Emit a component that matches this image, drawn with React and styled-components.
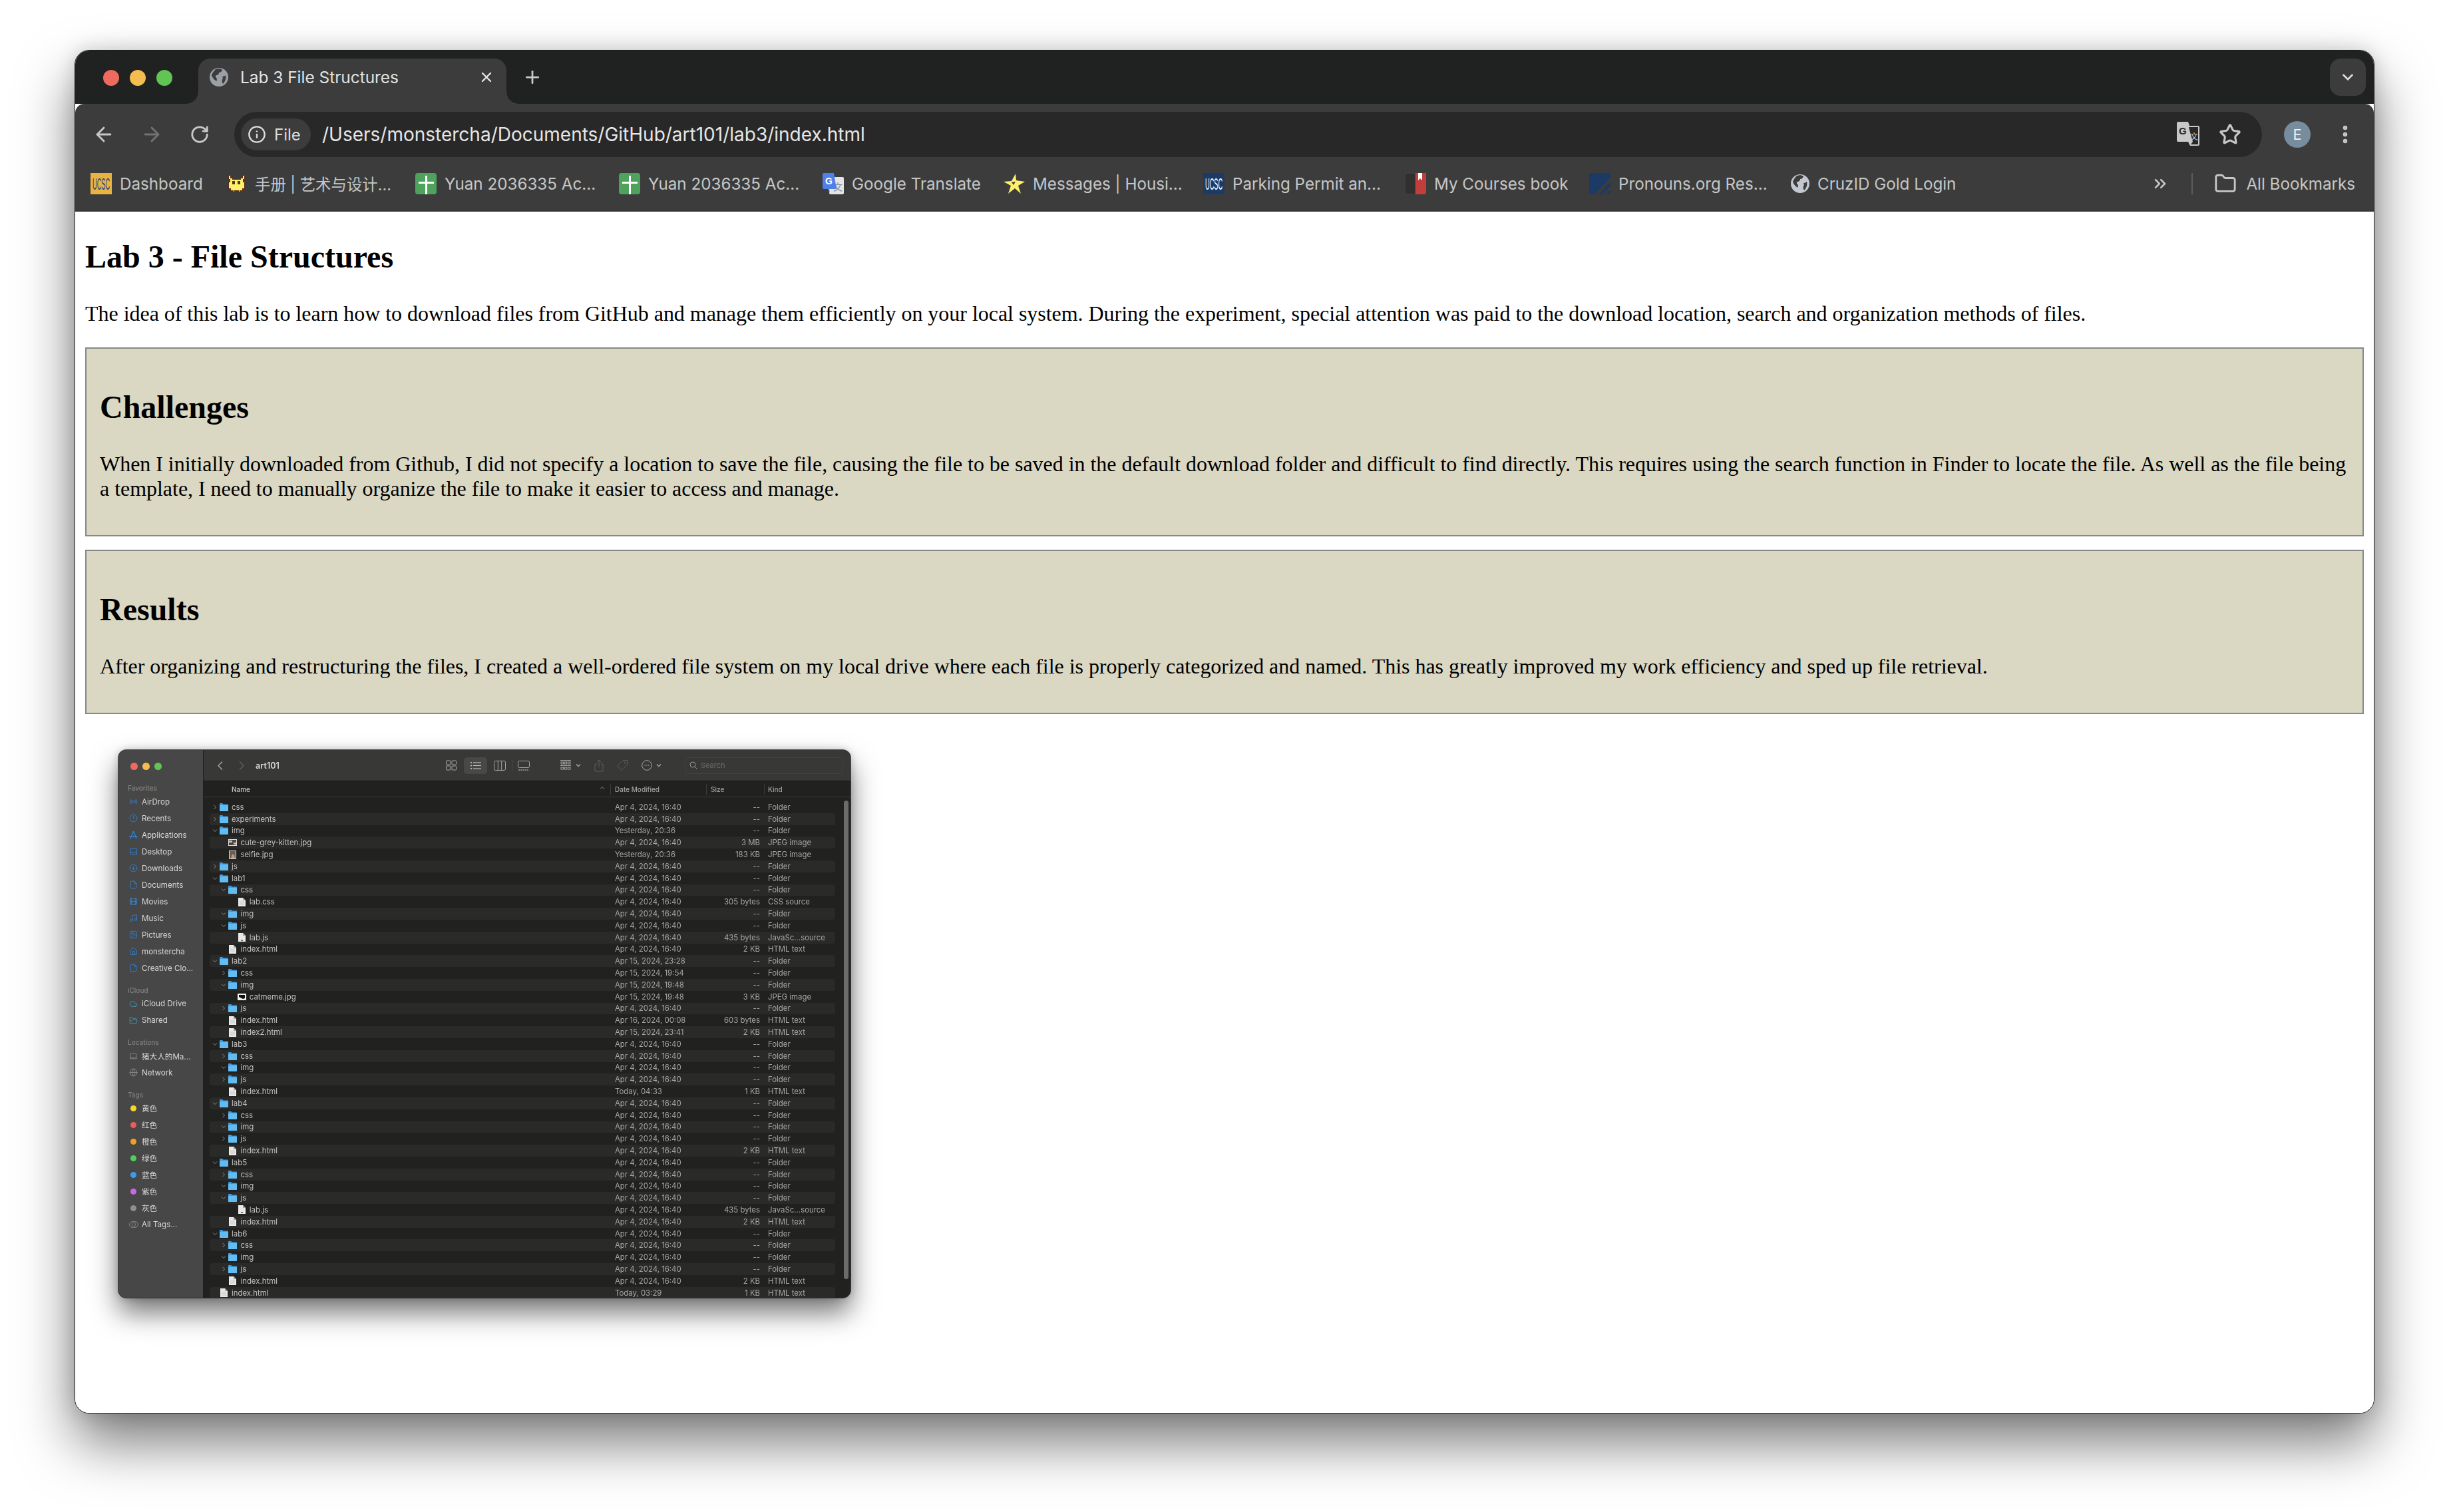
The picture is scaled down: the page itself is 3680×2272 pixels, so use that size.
import React from 'react'
import styled, { createGlobalStyle } from 'styled-components'
import {
  ArrowLeft, ArrowRight, RotateCw, Info, Star, EllipsisVertical, Plus, X, ChevronDown, ChevronsRight, Folder,
  Clock, PanelBottom, CircleArrowDown, File, Film, Music, Image, House, Cloud, FolderOpen, Laptop, Globe, Radio,
} from 'lucide-react'

const UI_FONT = `Inter, "Noto Sans CJK SC", sans-serif`

const GlobalStyle = createGlobalStyle`
  html, body { margin: 0; padding: 0; background: #fff; }
`

const Page = styled.div`
  width: 3680px;
  height: 2272px;
  box-sizing: border-box;
  padding: 75px 112px 0;
  overflow: hidden;
  background: #fff;
`

const Win = styled.div`
  width: 3456px;
  height: 2049px;
  box-sizing: border-box;
  border: 1px solid #1c1c1c;
  border-radius: 22px;
  overflow: hidden;
  display: flex;
  flex-direction: column;
  background: #fff;
  box-shadow: 0 44px 84px rgba(0, 0, 0, 0.52), 0 0 30px rgba(0, 0, 0, 0.16);
  font-family: ${UI_FONT};
`

const TabStrip = styled.div`
  height: 80px;
  box-sizing: border-box;
  padding: 12px 12px 0 42px;
  display: flex;
  align-items: flex-end;
  background: #202221;
  flex-shrink: 0;
`

const Lights = styled.div`
  display: flex;
  gap: ${p => p.$gap}px;
  align-self: center;
  margin-top: ${p => p.$top || 0}px;
`

const Light = styled.span`
  display: block;
  width: ${p => p.$size}px;
  height: ${p => p.$size}px;
  border-radius: 50%;
  background: ${p => p.$color};
`

const Tab = styled.div`
  position: relative;
  width: 463px;
  height: 68px;
  margin-left: 39px;
  box-sizing: border-box;
  padding: 0 18px 12px 17px;
  display: flex;
  align-items: center;
  gap: 18px;
  background: #3c3c3c;
  border-radius: 18px 18px 0 0;
  color: #e2e2e2;
  font-size: 24.4px;

  &::before, &::after {
    content: '';
    position: absolute;
    bottom: 0;
    width: 18px;
    height: 18px;
  }
  &::before { left: -18px; background: radial-gradient(circle at 0 0, transparent 17.5px, #3c3c3c 18px); }
  &::after { right: -18px; background: radial-gradient(circle at 100% 0, transparent 17.5px, #3c3c3c 18px); }
`

const TabTitle = styled.span`
  flex: 1;
  white-space: nowrap;
`

const NewTab = styled.span`
  display: flex;
  margin: 0 0 12px 24px;
  align-self: center;
  color: #c8c8c8;
`

const TabMenu = styled.span`
  margin-left: auto;
  align-self: flex-start;
  width: 54px;
  height: 56px;
  border-radius: 16px;
  background: #3c3c3c;
  color: #d8d8d8;
  display: flex;
  align-items: center;
  justify-content: center;
`

const Toolbar = styled.div`
  flex-shrink: 0;
  height: 162px;
  box-sizing: border-box;
  background: #3c3c3c;
  border-bottom: 2px solid #323232;
  border-radius: 14px 14px 0 0;
  display: flex;
  flex-direction: column;
`

const NavRow = styled.div`
  height: 80px;
  box-sizing: border-box;
  padding: 12px 7px 0;
  display: flex;
  align-items: center;
`

const NavBtn = styled.span`
  width: 72px;
  height: 68px;
  display: flex;
  align-items: center;
  justify-content: center;
  flex-shrink: 0;
  color: ${p => (p.$dim ? '#737373' : '#c8c8c8')};
`

const Omnibox = styled.div`
  flex: 1;
  height: 68px;
  margin: 0 17px 0 16px;
  box-sizing: border-box;
  padding: 0 31px 0 10px;
  border-radius: 34px;
  background: #282828;
  display: flex;
  align-items: center;
`

const FileChip = styled.span`
  width: 105px;
  height: 48px;
  box-sizing: border-box;
  padding-left: 10px;
  border-radius: 24px;
  background: #3c3c3c;
  color: #dcdcdc;
  display: flex;
  align-items: center;
  gap: 12px;
  font-size: 24px;
`

const UrlText = styled.span`
  margin-left: 17px;
  flex: 1;
  color: #e6e6e6;
  font-size: 28px;
  white-space: nowrap;
`

const OmniIcon = styled.span`
  display: flex;
  margin-left: ${p => p.$ml}px;
  color: #c8c8c8;
`

const Avatar = styled.span`
  width: 40px;
  height: 40px;
  border-radius: 50%;
  background: #778c9d;
  color: #eef2f5;
  font-size: 22px;
  display: flex;
  align-items: center;
  justify-content: center;
`

const BookmarkBar = styled.div`
  height: 80px;
  box-sizing: border-box;
  padding: 0 28px 0 23px;
  display: flex;
  align-items: center;
  gap: 36px;
`

const Bookmark = styled.div`
  display: flex;
  align-items: center;
  gap: 12px;
  color: #c7c7c7;
  font-size: 24.2px;
  flex-shrink: 0;
`

const BookmarkLabel = styled.span`
  width: ${p => p.$w}px;
  white-space: nowrap;
  font-size: ${p => (p.$cjk ? '23.4px' : 'inherit')};
`

const BookmarkEnd = styled.div`
  margin-left: auto;
  display: flex;
  align-items: center;
  color: #c7c7c7;
  font-size: 24.2px;
  white-space: nowrap;
`

const BarDivider = styled.span`
  width: 2px;
  height: 32px;
  margin: 0 32px 0 33px;
  background: #5b5b5b;
`

const AllBookmarks = styled.span`
  margin-left: 14px;
`

const Content = styled.main`
  flex: 1;
  overflow: hidden;
  padding: 0 15px;
  background: #fff;
  color: #000;
  font-family: "Liberation Serif", serif;
  font-size: 32px;
`

const Heading = styled.h2`
  margin: 40px 0;
  font-size: 48px;
  font-weight: 700;
`

const Lead = styled.p`
  margin: 32px 0;
  letter-spacing: -0.03px;
`

const Panel = styled.section`
  margin: 20px 0;
  padding: 19.5px 20px;
  border: 2px solid #888;
  background: #dad7c3;
`

const Shot = styled.div`
  margin-top: 20px;
  padding: 34px 50px;
`

/* finder screenshot inside the page */
const Finder = styled.div`
  position: relative;
  width: 1100px;
  height: 823px;
  border-radius: 12px;
  overflow: hidden;
  display: flex;
  background: #212120;
  box-shadow: 0 22px 42px rgba(0, 0, 0, 0.55), 0 0 14px rgba(0, 0, 0, 0.22), 0 0 0 1px #5d5d5d;
  filter: blur(0.35px);
  font-family: ${UI_FONT};
`

const Sidebar = styled.aside`
  width: 128px;
  flex-shrink: 0;
  box-sizing: border-box;
  padding-left: 14px;
  background: #474747;
  border-right: 1px solid #1d1d1d;
`

const SideLights = styled.div`
  height: 49px;
  padding-left: 4px;
  display: flex;
`

const SideHead = styled.div`
  height: 16px;
  margin-top: ${p => (p.$first ? 0 : 12.5)}px;
  line-height: 16px;
  font-size: 10px;
  font-weight: 500;
  color: #828282;
`

const SideItem = styled.div`
  height: 25px;
  padding-left: 1px;
  display: flex;
  align-items: center;
  gap: 5px;
  font-size: 11.6px;
  color: #d8d8d8;
  white-space: nowrap;
`

const SideIcon = styled.span`
  width: 15px;
  display: flex;
  justify-content: center;
  color: ${p => p.$color || '#2c86dc'};
`

const TagDot = styled.span`
  width: 9px;
  height: 9px;
  border-radius: 50%;
  background: ${p => p.$color};
`

const FinderMain = styled.div`
  flex: 1;
  min-width: 0;
  display: flex;
  flex-direction: column;
`

const FinderBar = styled.div`
  height: 47px;
  flex-shrink: 0;
  box-sizing: border-box;
  padding-left: 20px;
  background: #383837;
  border-bottom: 1px solid #161616;
  display: flex;
  align-items: center;
`

const BarSlot = styled.span`
  display: flex;
  align-items: center;
  justify-content: center;
  flex-shrink: 0;
  margin-left: ${p => p.$ml || 0}px;
  color: ${p => p.$color || '#a8a8a8'};
`

const ListPill = styled(BarSlot)`
  width: 35px;
  height: 25px;
  border-radius: 5px;
  background: #484847;
`

const FolderTitle = styled.span`
  width: 40px;
  margin-left: 16px;
  font-size: 12.6px;
  font-weight: 600;
  color: #d6d6d6;
`

const SearchBox = styled.div`
  width: 238px;
  height: 25px;
  margin-left: 35px;
  box-sizing: border-box;
  padding-left: 6px;
  border: 1px solid #424241;
  border-radius: 5px;
  display: flex;
  align-items: center;
  gap: 5px;
  color: #6d6d6d;
  font-size: 11px;
`

const columns = '609px 128px 90px 1fr'

const ListHead = styled.div`
  height: 24px;
  flex-shrink: 0;
  box-sizing: border-box;
  padding-left: 9px;
  display: grid;
  grid-template-columns: ${columns};
  align-items: center;
  background: #212120;
  border-bottom: 1px solid #3a3a39;
  font-size: 10px;
  font-weight: 500;
  color: #a2a2a2;
`

const HeadCell = styled.span`
  position: relative;
  padding-left: ${p => p.$pad || 0}px;
  color: ${p => p.$color || 'inherit'};
  display: flex;
  justify-content: space-between;
  padding-right: ${p => p.$end || 0}px;

  ${p => p.$sep !== undefined && `
    &::before {
      content: '';
      position: absolute;
      left: ${p.$sep}px;
      top: -2px;
      width: 1px;
      height: 16px;
      background: #3b3b3a;
    }
  `}
`

const List = styled.div`
  flex: 1;
  padding-top: 6px;
  overflow: hidden;
`

const Row = styled.div`
  height: 17.8px;
  margin: 0 23px 0 9px;
  display: grid;
  grid-template-columns: ${columns};
  align-items: center;
  border-radius: 4px;
  background: ${p => (p.$odd ? '#2a2a29' : 'transparent')};
  font-size: 11.4px;
  color: #a6a6a6;
  white-space: nowrap;
`

const NameCell = styled.span`
  display: flex;
  align-items: center;
  padding-left: ${p => 2.5 + p.$depth * 13.4}px;
  color: #c2c2c2;
`

const Twist = styled.span`
  width: 10px;
  flex-shrink: 0;
  display: flex;
  justify-content: center;
  color: #8c8c8c;
`

const RowIcon = styled.span`
  width: 13px;
  margin: 0 5px 0 2.5px;
  display: flex;
  justify-content: center;
`

const SizeCell = styled.span`
  text-align: right;
`

const KindCell = styled.span`
  padding-left: 12px;
`

const ScrollThumb = styled.span`
  position: absolute;
  right: 3px;
  top: 76px;
  width: 7px;
  height: 719px;
  border-radius: 4px;
  background: #6b6b6b;
`

const FolderGlyph = () => (
  <svg width="13" height="12" viewBox="0 0 13 12">
    <path d="M0 1.2C0 .5.5 0 1.2 0h3l1.3 1.4h6.3c.7 0 1.2.5 1.2 1.2V12H0Z" fill="#3f9bdf" />
    <path d="M0 3h13v8c0 .6-.4 1-1 1H1c-.6 0-1-.4-1-1Z" fill="#62bbf1" />
  </svg>
)

const PageGlyph = ({ dark }) => (
  <svg width="11" height="13" viewBox="0 0 11 13">
    <path d="M0 0h7l4 4v9H0Z" fill="#e8e8e8" />
    <path d="M7 0v4h4Z" fill="#a5a5a5" />
    {dark
      ? <rect x="4" y="10" width="3" height="2" fill="#777" />
      : <path d="M2 6h7M2 8h7M2 10h7" stroke="#bdbdbd" strokeWidth=".7" />}
  </svg>
)

const ThumbGlyph = ({ name }) => {
  if (name === 'selfie.jpg') {
    return (
      <svg width="11" height="13" viewBox="0 0 11 13">
        <rect width="11" height="13" fill="#d9d9d9" />
        <rect x="1" y="1" width="9" height="11" fill="#6d5b50" />
        <path d="M3 12 5 5l3 2 1 5Z" fill="#b49a88" />
      </svg>
    )
  }
  if (name === 'catmeme.jpg') {
    return (
      <svg width="13" height="10" viewBox="0 0 13 10">
        <rect width="13" height="10" fill="#f2f2f2" />
        <path d="M2 2h9v5l-3 1-4-2-2-1Z" fill="#111" />
      </svg>
    )
  }
  return (
    <svg width="13" height="10" viewBox="0 0 13 10">
      <rect width="13" height="10" fill="#dcdcdc" />
      <rect x="1" y="1" width="11" height="8" fill="#4f463f" />
      <path d="M1 2h5v3H1ZM8 5h4v3H8Z" fill="#c7bdb0" />
    </svg>
  )
}

const TwistGlyph = ({ open }) => (
  <svg width="8" height="8" viewBox="0 0 8 8" fill="none" stroke="currentColor" strokeWidth="1">
    <path d={open ? 'M1 2.5 4 5.5 7 2.5' : 'M2.5 1 5.5 4 2.5 7'} />
  </svg>
)

const GlobeFav = ({ color = '#9aa0a6', ink = '#3c3c3c' }) => (
  <svg width="28" height="28" viewBox="0 0 28 28">
    <circle cx="14" cy="14" r="14" fill={color} />
    <path d="M9 2c4-1 8-1 10 1-1 3-3 4-5 4 0 2-1 3-3 4-2 0-3 2-1 4 2 1 0 3 1 5-3-1-7-5-8-9 1-3 3-6 6-9Z" fill={ink} />
    <path d="M24 11c1 4 0 9-4 13-1-2-2-4-1-6s1-4 0-5c2 0 4-1 5-2Z" fill={ink} />
  </svg>
)

const UcscFav = ({ bg, ink }) => (
  <svg width="32" height="32" viewBox="0 0 32 32">
    <rect width="32" height="32" fill={bg} />
    <text transform="translate(3 25) scale(0.4 1)" fontFamily="Liberation Sans, sans-serif" fontSize="23" fill={ink}>UCSC</text>
  </svg>
)

const BirdFav = () => (
  <svg width="32" height="32" viewBox="0 0 32 32" shapeRendering="crispEdges">
    <path d="M4 3h3v4h3v2h12V7h3V3h3v6h-2v4h2v10h-3v3h-4v2h-2v-2h-6v2h-2v-2H7v-3H4V13h2V9H4Z" fill="#fff06a" stroke="#5a2c1a" strokeWidth="1" />
    <path d="M10 12h4v5h-4ZM18 12h4v5h-4Z" fill="#4b3a1f" />
  </svg>
)

const SheetFav = () => (
  <svg width="32" height="32" viewBox="0 0 32 32">
    <rect width="32" height="32" rx="4" fill="#4fa25c" />
    <path d="M15 4h3v9h10v3H18v16h-3V16H5v-3h10Z" fill="#fff" />
  </svg>
)

const TranslateFav = () => (
  <svg width="32" height="32" viewBox="0 0 32 32">
    <rect x="10" y="6" width="22" height="26" rx="2" fill="#e5e5e5" />
    <text x="16" y="26" fontFamily={UI_FONT} fontSize="14" fill="#7d8a96">文</text>
    <path d="M2 0h15l4 24H10l1 6 -3-6H2a2 2 0 0 1-2-2V2a2 2 0 0 1 2-2Z" fill="#4f7fe8" />
    <text x="4" y="17" fontFamily="Liberation Sans, sans-serif" fontWeight="700" fontSize="14" fill="#fff">G</text>
  </svg>
)

const StarFav = () => (
  <svg width="32" height="32" viewBox="0 0 32 32">
    <path d="M18 1 19 11l13 2-10 6 4 12-9-8-10 8 4-12L0 13l12-1Z" fill="#fff06a" />
    <path d="M12 14l6-1-3 5Z" fill="#3c3c3c" />
  </svg>
)

const BookFav = () => (
  <svg width="32" height="32" viewBox="0 0 32 32">
    <path d="M3 0h13v32H3a3 3 0 0 1-3-3V3a3 3 0 0 1 3-3Z" fill="#303030" stroke="#4c4c4c" />
    <path d="M16 0h16v29a3 3 0 0 1-3 3H16Z" fill="#c03f3c" />
    <path d="M20 0h6v11l-3-3-3 3Z" fill="#fff" />
  </svg>
)

const PronounFav = () => (
  <svg width="32" height="32" viewBox="0 0 32 32">
    <rect width="32" height="32" fill="#1b3a66" />
    <path d="M32 6v7L15 32H8ZM32 20v5l-7 7h-6Z" fill="#3c3c3c" />
  </svg>
)

const TranslateIcon = () => (
  <svg width="34" height="38" viewBox="0 0 34 38">
    <path d="M2 0h15l2 6h13a2 2 0 0 1 2 2v26a2 2 0 0 1-2 2H20l-3-6H2a2 2 0 0 1-2-2V2a2 2 0 0 1 2-2Z" fill="#c8c8c8" />
    <path d="M18 8h14v26H21l3-4-4-14Z" fill="#282828" />
    <text x="3" y="19" fontFamily="Liberation Sans, sans-serif" fontWeight="700" fontSize="15" fill="#282828">G</text>
    <text x="20" y="27" fontFamily={UI_FONT} fontSize="12" fill="#c8c8c8">文</text>
  </svg>
)

const TinyIcon = ({ w, h, children, stroke = 'currentColor' }) => (
  <svg width={w} height={h} viewBox={`0 0 ${w} ${h}`} fill="none" stroke={stroke} strokeWidth="1">
    {children}
  </svg>
)

const bookmarks = [
  { icon: <UcscFav bg="#e9b33f" ink="#1e3f8a" />, label: 'Dashboard', w: 123 },
  { icon: <BirdFav />, label: '手册 | 艺术与设计...', w: 205, cjk: true },
  { icon: <SheetFav />, label: 'Yuan 2036335 Ac...', w: 226 },
  { icon: <SheetFav />, label: 'Yuan 2036335 Ac...', w: 226 },
  { icon: <TranslateFav />, label: 'Google Translate', w: 192 },
  { icon: <StarFav />, label: 'Messages | Housi...', w: 220 },
  { icon: <UcscFav bg="#1b3a66" ink="#fff" />, label: 'Parking Permit an...', w: 223 },
  { icon: <BookFav />, label: 'My Courses book', w: 197 },
  { icon: <PronounFav />, label: 'Pronouns.org Res...', w: 223 },
  { icon: <GlobeFav color="#c3c8d0" />, label: 'CruzID Gold Login', w: 207 },
]

const AppsIcon = () => (
  <svg width="13" height="13" viewBox="0 0 13 13" fill="none" stroke="currentColor" strokeWidth="1.3">
    <path d="M6.5 1 2 12M6.5 1 11 12M.5 9h12" />
  </svg>
)

const TagsIcon = () => (
  <svg width="14" height="10" viewBox="0 0 14 10" fill="none" stroke="currentColor" strokeWidth=".9">
    <circle cx="5" cy="5" r="4.4" />
    <circle cx="9" cy="5" r="4.4" />
  </svg>
)

const sideIcon = Icon => <Icon size={13} strokeWidth={1.6} />

const sidebar = [
  {
    head: 'Favorites',
    items: [
      [sideIcon(Radio), 'AirDrop'], [sideIcon(Clock), 'Recents'], [<AppsIcon />, 'Applications'],
      [sideIcon(PanelBottom), 'Desktop'], [sideIcon(CircleArrowDown), 'Downloads'], [sideIcon(File), 'Documents'],
      [sideIcon(Film), 'Movies'], [sideIcon(Music), 'Music'], [sideIcon(Image), 'Pictures'],
      [sideIcon(House), 'monstercha'], [sideIcon(File), 'Creative Clo...'],
    ],
  },
  {
    head: 'iCloud',
    color: '#39a3c4',
    items: [[sideIcon(Cloud), 'iCloud Drive'], [sideIcon(FolderOpen), 'Shared']],
  },
  {
    head: 'Locations',
    color: '#8e8e8e',
    items: [[sideIcon(Laptop), '猪大人的Ma...'], [sideIcon(Globe), 'Network']],
  },
]

const tags = [
  ['#f7d629', '黄色'], ['#ee5c55', '红色'], ['#f39c27', '橙色'], ['#4fd05c', '绿色'],
  ['#3a9cf0', '蓝色'], ['#c868e4', '紫色'], ['#8e8e93', '灰色'],
]

const APR4 = 'Apr 4, 2024, 16:40'

// depth, type, name, date, size, kind
const dir = (depth, name, open, date = APR4) => ({ depth, type: 'dir', name, open, date, size: '--', kind: 'Folder' })
const doc = (depth, name, date = APR4, size = '2 KB', kind = 'HTML text', type = 'file') => ({ depth, type, name, date, size, kind })

const labRows = (lab, indexDate, indexSize, imgOpen = true) => [
  dir(0, lab, true),
  dir(1, 'css', false),
  dir(1, 'img', imgOpen),
  dir(1, 'js', false),
  doc(1, 'index.html', indexDate, indexSize),
]

const rows = [
  dir(0, 'css', false),
  dir(0, 'experiments', false),
  dir(0, 'img', true, 'Yesterday, 20:36'),
  doc(1, 'cute-grey-kitten.jpg', APR4, '3 MB', 'JPEG image', 'thumb'),
  doc(1, 'selfie.jpg', 'Yesterday, 20:36', '183 KB', 'JPEG image', 'thumb'),
  dir(0, 'js', false),
  dir(0, 'lab1', true),
  dir(1, 'css', true),
  doc(2, 'lab.css', APR4, '305 bytes', 'CSS source'),
  dir(1, 'img', true),
  dir(1, 'js', true),
  doc(2, 'lab.js', APR4, '435 bytes', 'JavaSc...source', 'js'),
  doc(1, 'index.html'),
  dir(0, 'lab2', true, 'Apr 15, 2024, 23:28'),
  dir(1, 'css', false, 'Apr 15, 2024, 19:54'),
  dir(1, 'img', true, 'Apr 15, 2024, 19:48'),
  doc(2, 'catmeme.jpg', 'Apr 15, 2024, 19:48', '3 KB', 'JPEG image', 'thumb'),
  dir(1, 'js', false),
  doc(1, 'index.html', 'Apr 16, 2024, 00:08', '603 bytes'),
  doc(1, 'index2.html', 'Apr 15, 2024, 23:41', '2 KB'),
  ...labRows('lab3', 'Today, 04:33', '1 KB'),
  ...labRows('lab4', APR4, '2 KB'),
  dir(0, 'lab5', true),
  dir(1, 'css', false),
  dir(1, 'img', true),
  dir(1, 'js', true),
  doc(2, 'lab.js', APR4, '435 bytes', 'JavaSc...source', 'js'),
  doc(1, 'index.html'),
  ...labRows('lab6', APR4, '2 KB'),
  doc(0, 'index.html', 'Today, 03:29', '1 KB'),
]

const rowIcon = row => {
  if (row.type === 'dir') return <FolderGlyph />
  if (row.type === 'thumb') return <ThumbGlyph name={row.name} />
  return <PageGlyph dark={row.type === 'js'} />
}

const FinderShot = () => (
  <Finder>
    <Sidebar>
      <SideLights>
        <Lights $gap={7.5}>
          <Light $size={10.5} $color="#ee6a5f" />
          <Light $size={10.5} $color="#f5bd4f" />
          <Light $size={10.5} $color="#61c454" />
        </Lights>
      </SideLights>
      {sidebar.map((group, i) => (
        <div key={group.head}>
          <SideHead $first={i === 0}>{group.head}</SideHead>
          {group.items.map(([icon, label]) => (
            <SideItem key={label}>
              <SideIcon $color={group.color}>{icon}</SideIcon>
              {label}
            </SideItem>
          ))}
        </div>
      ))}
      <SideHead>Tags</SideHead>
      {tags.map(([color, label]) => (
        <SideItem key={label}>
          <SideIcon><TagDot $color={color} /></SideIcon>
          {label}
        </SideItem>
      ))}
      <SideItem>
        <SideIcon $color="#8e8e8e"><TagsIcon /></SideIcon>
        All Tags...
      </SideItem>
    </Sidebar>
    <FinderMain>
      <FinderBar>
        <BarSlot>
          <TinyIcon w={10} h={15} stroke="#a8a8a8"><path d="M8 1.5 2 7.5 8 13.5" strokeWidth="1.4" /></TinyIcon>
        </BarSlot>
        <BarSlot $ml={22}>
          <TinyIcon w={10} h={15} stroke="#5f5f5f"><path d="M2 1.5 8 7.5 2 13.5" strokeWidth="1.4" /></TinyIcon>
        </BarSlot>
        <FolderTitle>art101</FolderTitle>
        <BarSlot $ml={246}>
          <TinyIcon w={16} h={16}>
            <rect x=".5" y="1" width="6.5" height="6" rx="1" /><rect x="9" y="1" width="6.5" height="6" rx="1" />
            <rect x=".5" y="9" width="6.5" height="6" rx="1" /><rect x="9" y="9" width="6.5" height="6" rx="1" />
          </TinyIcon>
        </BarSlot>
        <ListPill $ml={11} $color="#cfcfcf">
          <TinyIcon w={16} h={13}>
            <path d="M4 2h12M4 6.5h12M4 11h12" strokeWidth="1.2" />
            <path d="M0 2h2M0 6.5h2M0 11h2" strokeWidth="1.4" />
          </TinyIcon>
        </ListPill>
        <BarSlot $ml={10}>
          <TinyIcon w={18} h={15}><rect x=".5" y=".5" width="17" height="14" rx="2" /><path d="M6.3 .5v14M11.7 .5v14" /></TinyIcon>
        </BarSlot>
        <BarSlot $ml={9} $color="#4a4a49">
          <TinyIcon w={1} h={17}><path d="M.5 0v17" /></TinyIcon>
        </BarSlot>
        <BarSlot $ml={8}>
          <TinyIcon w={18} h={15}><rect x=".5" y=".5" width="17" height="10" rx="2" /><path d="M1 14h16" strokeDasharray="2 1.2" strokeWidth="1.4" /></TinyIcon>
        </BarSlot>
        <BarSlot $ml={46}>
          <TinyIcon w={16} h={17}>
            <path d="M0 .5h16M0 8.5h16" />
            <rect x="1" y="3" width="3.5" height="3" /><rect x="6.2" y="3" width="3.5" height="3" /><rect x="11.5" y="3" width="3.5" height="3" />
            <rect x="1" y="11" width="3.5" height="3" /><rect x="6.2" y="11" width="3.5" height="3" /><rect x="11.5" y="11" width="3.5" height="3" />
          </TinyIcon>
        </BarSlot>
        <BarSlot $ml={7}><TinyIcon w={8} h={8}><path d="M1 2.5 4 5.5 7 2.5" strokeWidth="1.3" /></TinyIcon></BarSlot>
        <BarSlot $ml={20} $color="#5c5c5b">
          <TinyIcon w={14} h={19}><path d="M4 7H1v11h12V7h-3M7 12V1M4 4l3-3 3 3" /></TinyIcon>
        </BarSlot>
        <BarSlot $ml={19} $color="#5c5c5b">
          <TinyIcon w={18} h={18}><path d="M1.5 10 10 1.5h6.5V8L8 16.5Z" /><circle cx="13" cy="5" r="1" /></TinyIcon>
        </BarSlot>
        <BarSlot $ml={20}>
          <TinyIcon w={16} h={16}><circle cx="8" cy="8" r="7.3" /><path d="M4.5 8h1.2M7.4 8h1.2M10.3 8h1.2" strokeWidth="1.3" /></TinyIcon>
        </BarSlot>
        <BarSlot $ml={6}><TinyIcon w={8} h={8}><path d="M1 2.5 4 5.5 7 2.5" strokeWidth="1.3" /></TinyIcon></BarSlot>
        <SearchBox>
          <TinyIcon w={12} h={12} stroke="#9a9a9a"><circle cx="5" cy="5" r="4" /><path d="M8 8l3.4 3.4" /></TinyIcon>
          Search
        </SearchBox>
      </FinderBar>
      <ListHead>
        <HeadCell $pad={33} $end={15} $color="#c4c4c4">
          Name
          <TinyIcon w={8} h={8} stroke="#8a8a8a"><path d="M1 5.5 4 2.5 7 5.5" /></TinyIcon>
        </HeadCell>
        <HeadCell $sep={-7}>Date Modified</HeadCell>
        <HeadCell $pad={16} $sep={9}>Size</HeadCell>
        <HeadCell $pad={12} $sep={6}>Kind</HeadCell>
      </ListHead>
      <List>
        {rows.map((row, i) => (
          <Row key={i} $odd={i % 2 === 1}>
            <NameCell $depth={row.depth}>
              <Twist>{row.type === 'dir' && <TwistGlyph open={row.open} />}</Twist>
              <RowIcon>{rowIcon(row)}</RowIcon>
              {row.name}
            </NameCell>
            <span>{row.date}</span>
            <SizeCell>{row.size}</SizeCell>
            <KindCell>{row.kind}</KindCell>
          </Row>
        ))}
      </List>
    </FinderMain>
    <ScrollThumb />
  </Finder>
)

export default function App() {
  return (
    <Page>
      <GlobalStyle />
      <Win>
        <TabStrip>
          <Lights $gap={16} $top={-10}>
            <Light $size={24} $color="#ee6a5f" />
            <Light $size={24} $color="#f5bd4f" />
            <Light $size={24} $color="#61c454" />
          </Lights>
          <Tab>
            <GlobeFav />
            <TabTitle>Lab 3 File Structures</TabTitle>
            <X size={24} strokeWidth={2.4} />
          </Tab>
          <NewTab><Plus size={30} strokeWidth={2.2} /></NewTab>
          <TabMenu><ChevronDown size={26} strokeWidth={2.6} /></TabMenu>
        </TabStrip>
        <Toolbar>
          <NavRow>
            <NavBtn><ArrowLeft size={34} strokeWidth={2} /></NavBtn>
            <NavBtn $dim><ArrowRight size={34} strokeWidth={2} /></NavBtn>
            <NavBtn><RotateCw size={30} strokeWidth={2.2} /></NavBtn>
            <Omnibox>
              <FileChip>
                <Info size={28} strokeWidth={2} />
                File
              </FileChip>
              <UrlText>/Users/monstercha/Documents/GitHub/art101/lab3/index.html</UrlText>
              <OmniIcon $ml={0}><TranslateIcon /></OmniIcon>
              <OmniIcon $ml={29}><Star size={34} strokeWidth={2.2} /></OmniIcon>
            </Omnibox>
            <NavBtn><Avatar>E</Avatar></NavBtn>
            <NavBtn><EllipsisVertical size={34} strokeWidth={2.6} /></NavBtn>
          </NavRow>
          <BookmarkBar>
            {bookmarks.map((b, i) => (
              <Bookmark key={i}>
                {b.icon}
                <BookmarkLabel $w={b.w} $cjk={b.cjk}>{b.label}</BookmarkLabel>
              </Bookmark>
            ))}
            <BookmarkEnd>
              <ChevronsRight size={28} strokeWidth={2.2} />
              <BarDivider />
              <Folder size={34} strokeWidth={2} />
              <AllBookmarks>All Bookmarks</AllBookmarks>
            </BookmarkEnd>
          </BookmarkBar>
        </Toolbar>
        <Content>
          <Heading>Lab 3 - File Structures</Heading>
          <Lead>The idea of this lab is to learn how to download files from GitHub and manage them efficiently on your local system. During the experiment, special attention was paid to the download location, search and organization methods of files.</Lead>
          <Panel>
            <Heading>Challenges</Heading>
            <Lead>When I initially downloaded from Github, I did not specify a location to save the file, causing the file to be saved in the default download folder and difficult to find directly. This requires using the search function in Finder to locate the file. As well as the file being a template, I need to manually organize the file to make it easier to access and manage.</Lead>
          </Panel>
          <Panel>
            <Heading>Results</Heading>
            <Lead>After organizing and restructuring the files, I created a well-ordered file system on my local drive where each file is properly categorized and named. This has greatly improved my work efficiency and sped up file retrieval.</Lead>
          </Panel>
          <Shot><FinderShot /></Shot>
        </Content>
      </Win>
    </Page>
  )
}
